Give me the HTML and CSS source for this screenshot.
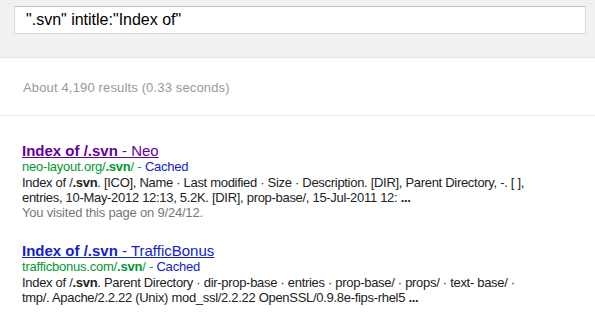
FILE: index.html
```html
<!DOCTYPE html>
<html>

<head>
    <meta charset="utf-8" />
    <title>".svn" intitle:"Index of" - 搜索</title>
    <link rel="stylesheet" href="styles.css">
</head>

<body>
    <!-- 顶部搜索栏 -->
    <div class="header">
        <div class="searchbox">".svn" intitle:"Index of"</div>
    </div>

    <!-- 结果统计 -->
    <div class="stats">About 4,190 results (0.33 seconds)</div>

    <!-- 搜索结果 -->
    <div class="results">
        <div class="result">
            <h3 class="title"><a class="visited" href="#"><b>Index of /.svn</b> - Neo</a></h3>
            <div class="url">neo-layout.org/<b>.svn</b>/ - <a class="cached" href="#">Cached</a></div>
            <div class="snippet">
                Index of /<b>.svn</b>. [ICO], Name · Last modified · Size · Description. [DIR], Parent Directory, -. [ ],<br>
                entries, 10-May-2012 12:13, 5.2K. [DIR], prop-base/, 15-Jul-2011 12: <b>...</b>
            </div>
            <div class="note">You visited this page on 9/24/12.</div>
        </div>
        <div class="result">
            <h3 class="title"><a href="#"><b>Index of /.svn</b> - TrafficBonus</a></h3>
            <div class="url">trafficbonus.com/<b>.svn</b>/ - <a class="cached" href="#">Cached</a></div>
            <div class="snippet">
                Index of /<b>.svn</b>. Parent Directory · dir-prop-base · entries · prop-base/ · props/ · text- base/ ·<br>
                tmp/. Apache/2.2.22 (Unix) mod_ssl/2.2.22 OpenSSL/0.9.8e-fips-rhel5 <b>...</b>
            </div>
        </div>
    </div>
</body>

</html>
```

FILE: styles.css
```css
/* 重置 */
* {
    padding: 0;
    margin: 0;
    box-sizing: border-box;
}

body {
    font-family: "Liberation Sans", Arial, sans-serif;
    font-size: 13px;
    background-color: #ffffff;
    color: #222222;
}

/* 顶部灰色区域 */
.header {
    height: 58px;
    padding: 6px 9px 0 14px;
    background-color: #f1f1f1;
    border-bottom: 1px solid #e5e5e5;
}

/* 搜索框 */
.searchbox {
    height: 28px;
    padding-left: 11px;
    background-color: #ffffff;
    border: 1px solid #d9d9d9;
    border-top-color: #c0c0c0;
    font-size: 16px;
    line-height: 26px;
    color: #000000;
}

/* 统计 */
.stats {
    padding: 22px 0 19px 23px;
    font-size: 13px;
    line-height: 16px;
    letter-spacing: 0.15px;
    color: #999999;
    border-bottom: 1px solid #ebebeb;
}

.results {
    padding: 27px 0 0 22px;
}

.result {
    margin-bottom: 23px;
}

/* 标题 */
.title {
    font-size: 15px;
    font-weight: normal;
    line-height: 16px;
}

.title a {
    color: #1122cc;
    text-decoration: underline;
}

.title a.visited {
    color: #660099;
}

/* 网址 */
.url {
    font-size: 13px;
    line-height: 16px;
    letter-spacing: -0.22px;
    color: #009933;
}

.cached {
    color: #1122cc;
    text-decoration: none;
}

/* 摘要 */
.snippet {
    font-size: 13px;
    line-height: 15px;
    letter-spacing: -0.3px;
    color: #222222;
}

.note {
    font-size: 13px;
    line-height: 15px;
    letter-spacing: -0.2px;
    color: #777777;
}
```
